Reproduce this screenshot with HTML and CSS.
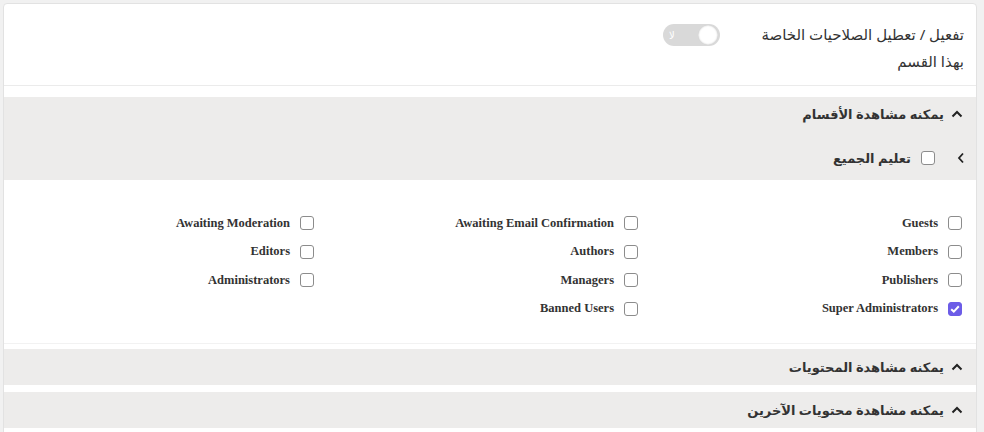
FILE: index.html
```html
<!DOCTYPE html>
<html lang="ar" dir="rtl">
<head>
    <meta charset="UTF-8">
    <title>الصلاحيات الخاصة</title>
    <link rel="stylesheet" href="styles.css">
</head>
<body>
    <div class="card">
        <div class="head">
            <div class="head-label">تفعيل / تعطيل الصلاحيات الخاصة<br>بهذا القسم</div>
            <div class="toggle">
                <span class="toggle-knob"></span>
                <span class="toggle-text">لا</span>
            </div>
        </div>

        <div class="section">
            <div class="section-title">
                <svg class="chev" width="12" height="8" viewBox="0 0 12 8"><polyline points="1.5,6.5 6,2 10.5,6.5" fill="none" stroke="#222" stroke-width="2"/></svg>
                <span>يمكنه مشاهدة الأقسام</span>
            </div>
            <div class="section-sub">
                <svg class="chev-side" width="8" height="12" viewBox="0 0 8 12"><polyline points="6,1.5 2,6 6,10.5" fill="none" stroke="#222" stroke-width="1.8"/></svg>
                <span class="box"></span>
                <span>تعليم الجميع</span>
            </div>
        </div>

        <div class="perms">
            <label class="perm"><span class="box"></span><span>Guests</span></label>
            <label class="perm"><span class="box"></span><span>Awaiting Email Confirmation</span></label>
            <label class="perm"><span class="box"></span><span>Awaiting Moderation</span></label>
            <label class="perm"><span class="box"></span><span>Members</span></label>
            <label class="perm"><span class="box"></span><span>Authors</span></label>
            <label class="perm"><span class="box"></span><span>Editors</span></label>
            <label class="perm"><span class="box"></span><span>Publishers</span></label>
            <label class="perm"><span class="box"></span><span>Managers</span></label>
            <label class="perm"><span class="box"></span><span>Administrators</span></label>
            <label class="perm">
                <span class="box checked"><svg width="10" height="8" viewBox="0 0 10 8"><polyline points="1.2,4.2 3.8,6.6 8.8,1.2" fill="none" stroke="#fff" stroke-width="2"/></svg></span>
                <span>Super Administrators</span>
            </label>
            <label class="perm"><span class="box"></span><span>Banned Users</span></label>
        </div>

        <div class="section section-closed">
            <div class="section-title">
                <svg class="chev" width="12" height="8" viewBox="0 0 12 8"><polyline points="1.5,6.5 6,2 10.5,6.5" fill="none" stroke="#222" stroke-width="2"/></svg>
                <span>يمكنه مشاهدة المحتويات</span>
            </div>
        </div>

        <div class="section section-closed">
            <div class="section-title">
                <svg class="chev" width="12" height="8" viewBox="0 0 12 8"><polyline points="1.5,6.5 6,2 10.5,6.5" fill="none" stroke="#222" stroke-width="2"/></svg>
                <span>يمكنه مشاهدة محتويات الآخرين</span>
            </div>
        </div>
    </div>
</body>
</html>
```

FILE: styles.css
```css
html, body {
    height: 100%;
}

body {
    margin: 0;
    padding: 3px 7px 0 3px;
    background: #f1f1f1;
    font-family: "Noto Sans", "DejaVu Sans", sans-serif;
    color: #333;
    overflow: hidden;
}

.card {
    background: #fff;
    border: 1px solid #e2e2e2;
    border-radius: 4px;
    height: 100%;
}

.head {
    display: flex;
    align-items: flex-start;
    padding: 17px 12px 0 0;
    height: 64px;
    border-bottom: 1px solid #ebebeb;
}

.head-label {
    width: 244px;
    flex: none;
    white-space: nowrap;
    font-size: 15px;
    line-height: 27px;
    color: #333;
}

.toggle {
    margin-top: 3px;
    width: 57px;
    height: 22px;
    border-radius: 11px;
    background: #d9d9d9;
    display: flex;
    align-items: center;
    justify-content: space-between;
    padding: 0 2px 0 6px;
    box-sizing: border-box;
}

.toggle-knob {
    width: 20px;
    height: 20px;
    border-radius: 50%;
    background: #fff;
    box-shadow: inset 0 0 2px rgba(0, 0, 0, 0.3);
}

.toggle-text {
    color: #fff;
    font-size: 10px;
}

.section {
    margin-top: 11px;
    background: #edeceb;
}

.section-title {
    display: flex;
    align-items: center;
    gap: 7px;
    height: 34px;
    padding-right: 13px;
    font-size: 13px;
    font-weight: bold;
    color: #333;
}

.section-sub {
    display: flex;
    align-items: center;
    height: 45px;
    padding: 4px 11px 0 0;
    font-size: 13px;
    font-weight: bold;
    color: #333;
}

.section-sub .box {
    margin: 0 22px 0 10px;
    background: #fff;
}

.box {
    width: 14px;
    height: 14px;
    border: 1px solid #8c8c8c;
    border-radius: 3px;
    box-sizing: border-box;
    flex: none;
    display: flex;
    align-items: center;
    justify-content: center;
}

.box.checked {
    background: #6c5ce7;
    border-color: #6c5ce7;
}

.perms {
    display: grid;
    grid-template-columns: repeat(3, 1fr);
    padding: 29px 0 20px;
    border-bottom: 1px solid #f2f2f2;
}

.perm {
    display: flex;
    align-items: center;
    gap: 10px;
    height: 28.5px;
    padding-right: 14px;
    font-family: "Liberation Serif", "Times New Roman", serif;
    font-weight: bold;
    font-size: 12.5px;
    color: #333;
}

.section-closed {
    margin-top: 5px;
}

.section-closed .section-title {
    height: 36px;
}

.section-closed + .section-closed {
    margin-top: 7px;
}
```
